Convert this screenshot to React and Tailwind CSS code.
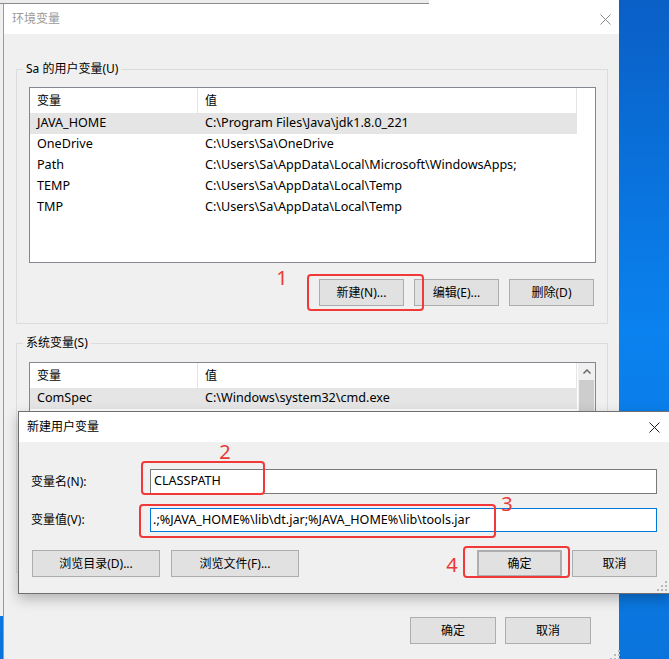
import React from 'react';

const userRows = [
  { name: 'JAVA_HOME', value: 'C:\\Program Files\\Java\\jdk1.8.0_221', selected: true },
  { name: 'OneDrive', value: 'C:\\Users\\Sa\\OneDrive' },
  { name: 'Path', value: 'C:\\Users\\Sa\\AppData\\Local\\Microsoft\\WindowsApps;' },
  { name: 'TEMP', value: 'C:\\Users\\Sa\\AppData\\Local\\Temp' },
  { name: 'TMP', value: 'C:\\Users\\Sa\\AppData\\Local\\Temp' },
];

const systemRows = [
  { name: 'ComSpec', value: 'C:\\Windows\\system32\\cmd.exe', selected: true },
  { name: 'DriverData', value: 'C:\\Windows\\System32\\Drivers\\DriverData' },
  { name: 'NUMBER_OF_PROCESSORS', value: '8' },
  { name: 'OS', value: 'Windows_NT' },
];

const CloseIcon = ({ color }) => (
  <svg width="11" height="11" viewBox="0 0 11 11" fill="none">
    <path d="M0.5 0.5L10.5 10.5M10.5 0.5L0.5 10.5" stroke={color} strokeWidth="1" />
  </svg>
);

const Grip = () => (
  <svg width="10" height="10" viewBox="0 0 10 10">
    <rect x="8" y="0" width="2" height="2" fill="#b8b8b8" />
    <rect x="4" y="4" width="2" height="2" fill="#b8b8b8" />
    <rect x="8" y="4" width="2" height="2" fill="#b8b8b8" />
    <rect x="0" y="8" width="2" height="2" fill="#b8b8b8" />
    <rect x="4" y="8" width="2" height="2" fill="#b8b8b8" />
    <rect x="8" y="8" width="2" height="2" fill="#b8b8b8" />
  </svg>
);

const WinButton = ({ children, className = '' }) => (
  <div
    className={`h-[27px] flex items-center justify-center bg-[#e1e1e1] border border-[#adadad] text-[12px] text-black ${className}`}
  >
    {children}
  </div>
);

const ListBox = ({ rows, height, scroll }) => (
  <div className={`w-[567px] ${height} border border-[#828790] bg-white flex overflow-hidden`}>
    <div className="flex-1">
      <div className="flex h-[25px] w-[547px] border-r border-[#e5e5e5]">
        <div className="w-[168px] pl-[7px] flex items-center border-r border-[#e5e5e5]">变量</div>
        <div className="flex-1 pl-[7px] flex items-center">值</div>
      </div>
      {rows.map((row) => (
        <div
          key={row.name}
          className={`flex h-[21px] w-[547px] items-center text-[12.6px] ${row.selected ? 'bg-[#e5e5e5]' : ''}`}
        >
          <div className="w-[168px] pl-[7px] whitespace-nowrap">{row.name}</div>
          <div className="flex-1 pl-[7px] whitespace-nowrap">{row.value}</div>
        </div>
      ))}
    </div>
    {scroll && (
      <div className="w-[17px] bg-[#f0f0f0] flex flex-col items-center">
        <div className="h-[17px] flex items-center justify-center">
          <svg width="8" height="5" viewBox="0 0 8 5" fill="none">
            <path d="M0.5 4.5L4 1L7.5 4.5" stroke="#606060" strokeWidth="1.4" />
          </svg>
        </div>
        <div className="w-[15px] flex-1 bg-[#cdcdcd]" />
      </div>
    )}
  </div>
);

const GroupBox = ({ label, className = '', children }) => (
  <fieldset className={`w-[592px] border border-[#dcdcdc] ${className}`}>
    <legend className="ml-[6px] px-[3px] leading-[16px]">{label}</legend>
    <div className="pl-[12px]">{children}</div>
  </fieldset>
);

const Annotation = ({ box, num }) => (
  <>
    <div
      className="absolute border-2 border-[#f2393a] rounded-[4px]"
      style={{ left: box[0], top: box[1], width: box[2], height: box[3] }}
    />
    <div
      className="absolute w-[20px] h-[24px] flex items-center justify-center text-[20px] leading-none text-[#e83a35]"
      style={{ left: num[0] - 10, top: num[1] - 12 }}
    >
      {num[2]}
    </div>
  </>
);

const App = () => {
  return (
    <div className="relative w-[669px] h-[659px] overflow-hidden bg-linear-to-b from-[#0a5fc6] via-[#0a82ef] to-[#0a74dc] font-['Noto_Sans','Noto_Sans_CJK_SC',sans-serif] text-[12px] text-black">
      {/* window behind */}
      <div className="absolute left-0 top-0 w-[619px] h-[616px] bg-[#f0f0f0]">
        <div className="flex h-[4px]">
          <div className="w-[429px] bg-[#ececec] border-b border-[#8c8c8c]" />
          <div className="flex-1 bg-white" />
        </div>
      </div>

      {/* 环境变量 */}
      <div className="absolute left-[3px] top-[4px] w-[616px] h-[680px] bg-[#f0f0f0] border-l border-[#9a9a9a]">
        <div className="h-[30px] bg-white flex items-center justify-between pl-[8px] pr-[8px]">
          <span className="text-[#9a9a9a]">环境变量</span>
          <CloseIcon color="#8a8a8a" />
        </div>
        <div className="pl-[12px]">
          <GroupBox label="Sa 的用户变量(U)" className="mt-[27px] pb-[17px]">
            <div className="mt-[10px]">
              <ListBox rows={userRows} height="h-[176px]" />
            </div>
            <div className="mt-[16px] w-[565px] flex justify-end gap-[10px]">
              <WinButton className="w-[85px]">新建(N)...</WinButton>
              <WinButton className="w-[85px]">编辑(E)...</WinButton>
              <WinButton className="w-[85px]">删除(D)</WinButton>
            </div>
          </GroupBox>
          <GroupBox label="系统变量(S)" className="mt-[11px] pb-[17px]">
            <div className="mt-[11px]">
              <ListBox rows={systemRows} height="h-[150px]" scroll />
            </div>
            <div className="mt-[16px] w-[565px] flex justify-end gap-[10px]">
              <WinButton className="w-[85px]">新建(W)...</WinButton>
              <WinButton className="w-[85px]">编辑(I)...</WinButton>
              <WinButton className="w-[85px]">删除(L)</WinButton>
            </div>
          </GroupBox>
        </div>
        <div className="mt-[44px] pr-[28px] flex justify-end gap-[9px]">
          <WinButton className="w-[86px]">确定</WinButton>
          <WinButton className="w-[86px]">取消</WinButton>
        </div>
        <div className="absolute left-[606px] top-[646px]">
          <Grip />
        </div>
      </div>

      {/* 新建用户变量 */}
      <div className="absolute left-[18px] top-[411px] w-[652px] border border-[#6f6f6f] bg-[#f0f0f0] shadow-[0_5px_12px_rgba(0,0,0,0.25)]">
        <div className="h-[30px] bg-white flex items-center justify-between pl-[8px] pr-[9px]">
          <span>新建用户变量</span>
          <CloseIcon color="#1a1a1a" />
        </div>
        <div className="relative pt-[27px] pb-[16px] pl-[12px] pr-[12px]">
          <div className="flex items-center h-[25px]">
            <div className="w-[119px]">变量名(N):</div>
            <div className="w-[507px] h-[25px] bg-white border border-[#7a7a7a] pl-[3px] flex items-center text-[12.6px]">
              CLASSPATH
            </div>
          </div>
          <div className="flex items-center h-[24px] mt-[14px]">
            <div className="w-[119px]">变量值(V):</div>
            <div className="w-[507px] h-[24px] bg-white border border-[#0078d7] pl-[2px] flex items-center whitespace-nowrap text-[12.6px]">
              .;%JAVA_HOME%\lib\dt.jar;%JAVA_HOME%\lib\tools.jar
            </div>
          </div>
          <div className="mt-[18px] flex justify-between">
            <div className="flex gap-[11px] pl-[1px]">
              <WinButton className="w-[128px]">浏览目录(D)...</WinButton>
              <WinButton className="w-[128px]">浏览文件(F)...</WinButton>
            </div>
            <div className="flex gap-[10px]">
              <WinButton className="w-[85px] border-2 border-[#0078d7]">确定</WinButton>
              <WinButton className="w-[85px]">取消</WinButton>
            </div>
          </div>
          <div className="absolute right-[2px] bottom-[2px]">
            <Grip />
          </div>
        </div>
      </div>

      {/* red annotations */}
      <Annotation box={[307, 274, 117, 37]} num={[282, 278, '1']} />
      <Annotation box={[141, 461, 124, 34]} num={[225, 452, '2']} />
      <Annotation box={[139, 504, 357, 34]} num={[507, 504, '3']} />
      <Annotation box={[463, 546, 107, 32]} num={[452, 565, '4']} />
    </div>
  );
};

export default App;
